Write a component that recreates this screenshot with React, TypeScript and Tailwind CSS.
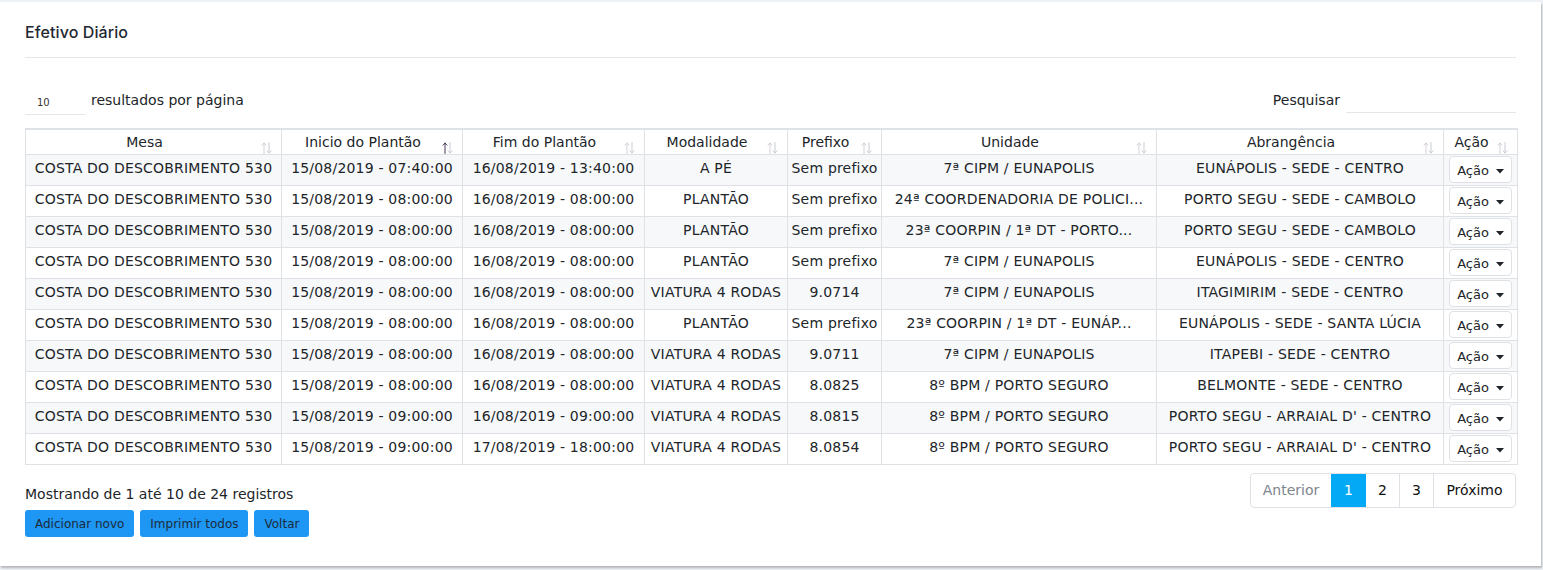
import React from 'react';

interface Row {
  mesa: string;
  inicio: string;
  fim: string;
  modalidade: string;
  prefixo: string;
  unidade: string;
  abrangencia: string;
}

const rows: Row[] = [
  { mesa: 'COSTA DO DESCOBRIMENTO 530', inicio: '15/08/2019 - 07:40:00', fim: '16/08/2019 - 13:40:00', modalidade: 'A PÉ', prefixo: 'Sem prefixo', unidade: '7ª CIPM / EUNAPOLIS', abrangencia: 'EUNÁPOLIS - SEDE - CENTRO' },
  { mesa: 'COSTA DO DESCOBRIMENTO 530', inicio: '15/08/2019 - 08:00:00', fim: '16/08/2019 - 08:00:00', modalidade: 'PLANTÃO', prefixo: 'Sem prefixo', unidade: '24ª COORDENADORIA DE POLICI...', abrangencia: 'PORTO SEGU - SEDE - CAMBOLO' },
  { mesa: 'COSTA DO DESCOBRIMENTO 530', inicio: '15/08/2019 - 08:00:00', fim: '16/08/2019 - 08:00:00', modalidade: 'PLANTÃO', prefixo: 'Sem prefixo', unidade: '23ª COORPIN / 1ª DT - PORTO...', abrangencia: 'PORTO SEGU - SEDE - CAMBOLO' },
  { mesa: 'COSTA DO DESCOBRIMENTO 530', inicio: '15/08/2019 - 08:00:00', fim: '16/08/2019 - 08:00:00', modalidade: 'PLANTÃO', prefixo: 'Sem prefixo', unidade: '7ª CIPM / EUNAPOLIS', abrangencia: 'EUNÁPOLIS - SEDE - CENTRO' },
  { mesa: 'COSTA DO DESCOBRIMENTO 530', inicio: '15/08/2019 - 08:00:00', fim: '16/08/2019 - 08:00:00', modalidade: 'VIATURA 4 RODAS', prefixo: '9.0714', unidade: '7ª CIPM / EUNAPOLIS', abrangencia: 'ITAGIMIRIM - SEDE - CENTRO' },
  { mesa: 'COSTA DO DESCOBRIMENTO 530', inicio: '15/08/2019 - 08:00:00', fim: '16/08/2019 - 08:00:00', modalidade: 'PLANTÃO', prefixo: 'Sem prefixo', unidade: '23ª COORPIN / 1ª DT - EUNÁP...', abrangencia: 'EUNÁPOLIS - SEDE - SANTA LÚCIA' },
  { mesa: 'COSTA DO DESCOBRIMENTO 530', inicio: '15/08/2019 - 08:00:00', fim: '16/08/2019 - 08:00:00', modalidade: 'VIATURA 4 RODAS', prefixo: '9.0711', unidade: '7ª CIPM / EUNAPOLIS', abrangencia: 'ITAPEBI - SEDE - CENTRO' },
  { mesa: 'COSTA DO DESCOBRIMENTO 530', inicio: '15/08/2019 - 08:00:00', fim: '16/08/2019 - 08:00:00', modalidade: 'VIATURA 4 RODAS', prefixo: '8.0825', unidade: '8º BPM / PORTO SEGURO', abrangencia: 'BELMONTE - SEDE - CENTRO' },
  { mesa: 'COSTA DO DESCOBRIMENTO 530', inicio: '15/08/2019 - 09:00:00', fim: '16/08/2019 - 09:00:00', modalidade: 'VIATURA 4 RODAS', prefixo: '8.0815', unidade: '8º BPM / PORTO SEGURO', abrangencia: "PORTO SEGU - ARRAIAL D' - CENTRO" },
  { mesa: 'COSTA DO DESCOBRIMENTO 530', inicio: '15/08/2019 - 09:00:00', fim: '17/08/2019 - 18:00:00', modalidade: 'VIATURA 4 RODAS', prefixo: '8.0854', unidade: '8º BPM / PORTO SEGURO', abrangencia: "PORTO SEGU - ARRAIAL D' - CENTRO" },
];

const columns = [
  { label: 'Mesa', width: 'w-[256px]' },
  { label: 'Inicio do Plantão', width: 'w-[181px]', active: true },
  { label: 'Fim do Plantão', width: 'w-[182px]' },
  { label: 'Modalidade', width: 'w-[143px]' },
  { label: 'Prefixo', width: 'w-[94px]' },
  { label: 'Unidade', width: 'w-[275px]' },
  { label: 'Abrangência', width: 'w-[287px]' },
  { label: 'Ação', width: 'w-[74px]' },
];

const SortIcon: React.FC<{ active?: boolean }> = ({ active }) => (
  <svg width="11" height="12" viewBox="0 0 11 12" className="absolute right-[9px] bottom-0">
    <g fill="none" strokeWidth="1" strokeLinecap="round">
      <path d="M3 11.5V1M1 3.2L3 1l2 2.2" stroke={active ? '#4b3b5c' : '#d5cfd8'} />
      <path d="M8 0.5V11M6 8.8L8 11l2-2.2" stroke="#c8cdd3" />
    </g>
  </svg>
);

const App: React.FC = () => {
  const cellCls = 'border border-[#dee2e6] px-[3px] pt-[3px] pb-[7px] text-center align-top whitespace-nowrap overflow-hidden tracking-[0.2px]';
  return (
    <div className="w-[1543px] h-[570px] bg-[#eef1f5] pt-[2px] font-['DejaVu_Sans',sans-serif] text-[#212529]">
      <div className="w-[1541px] h-[564px] bg-white shadow-[1px_2px_2px_rgba(0,0,0,0.25)] px-[25px]">
        <div className="h-[56px] pt-[19px] border-b border-[#e4e7ea]">
          <h1 className="font-['Inter',sans-serif] text-[16px] leading-[22px] font-medium text-[#1f2933] tracking-[0.1px]">Efetivo Diário</h1>
        </div>

        <div className="flex items-start justify-between mt-[31px] h-[26px]">
          <div className="flex items-start">
            <div className="w-[60px] h-[26px] border-b border-[#e4e7ea] pl-[12px] pt-[6px] text-[10px] text-[#333]">10</div>
            <span className="ml-[6px] text-[14px] leading-[20px] text-[#212529] mt-[1px]">resultados por página</span>
          </div>
          <div className="flex items-start">
            <span className="text-[14px] leading-[20px] mt-[1px] mr-[6px] text-[#212529]">Pesquisar</span>
            <div className="w-[170px] h-[24px] border-b border-[#e4e7ea]" />
          </div>
        </div>

        <table className="mt-[13px] table-fixed border-collapse w-[1492px] border-t-2 border-t-[#dee2e6] text-[14px] leading-[20px]">
          <colgroup>
            {columns.map((c) => (
              <col key={c.label} className={c.width} />
            ))}
          </colgroup>
          <thead>
            <tr>
              {columns.map((c) => (
                <th key={c.label} className="relative border border-[#dee2e6] pl-[4px] pr-[22px] pt-[2px] pb-[2px] font-normal text-center">
                  {c.label}
                  <SortIcon active={c.active} />
                </th>
              ))}
            </tr>
          </thead>
          <tbody>
            {rows.map((r, i) => (
              <tr key={i} className={i % 2 === 0 ? 'bg-[#f6f8fa]' : 'bg-white'}>
                <td className={cellCls}>{r.mesa}</td>
                <td className={cellCls}>{r.inicio}</td>
                <td className={cellCls}>{r.fim}</td>
                <td className={cellCls}>{r.modalidade}</td>
                <td className={cellCls}>{r.prefixo}</td>
                <td className={cellCls}>{r.unidade}</td>
                <td className={cellCls}>{r.abrangencia}</td>
                <td className="border border-[#dee2e6] px-[5px] pt-[1px] pb-[1px] align-top">
                  <button className="w-[63px] h-[27px] bg-white border border-[#dee2e6] rounded-[4px] text-[13px] text-[#212529] flex items-center justify-center gap-[7px] pt-[3px]">
                    Ação
                    <svg width="8" height="5" viewBox="0 0 8 5"><path d="M0 0h8L4 4.5z" fill="#212529" /></svg>
                  </button>
                </td>
              </tr>
            ))}
          </tbody>
        </table>

        <div className="flex justify-between items-start mt-[8px]">
          <div className="pt-[11px]">
            <div className="text-[14px] leading-[20px] text-[#212529]">Mostrando de 1 até 10 de 24 registros</div>
            <div className="flex gap-[6px] mt-[6px]">
              {['Adicionar novo', 'Imprimir todos', 'Voltar'].map((b) => (
                <button key={b} className="h-[27px] px-[10px] bg-[#1e96f4] rounded-[3px] text-[12px] text-[#1c2b3a]">
                  {b}
                </button>
              ))}
            </div>
          </div>
          <div className="flex h-[35px] border border-[#dee2e6] rounded-[4px] overflow-hidden text-[14px]">
            <span className="w-[80px] flex items-center justify-center text-[#7d858d]">Anterior</span>
            <span className="w-[35px] flex items-center justify-center bg-[#03a9f4] text-white">1</span>
            <span className="w-[34px] flex items-center justify-center border-r border-[#dee2e6] text-[#111]">2</span>
            <span className="w-[34px] flex items-center justify-center border-r border-[#dee2e6] text-[#111]">3</span>
            <span className="w-[81px] flex items-center justify-center text-[#111]">Próximo</span>
          </div>
        </div>
      </div>
    </div>
  );
};

export default App;
